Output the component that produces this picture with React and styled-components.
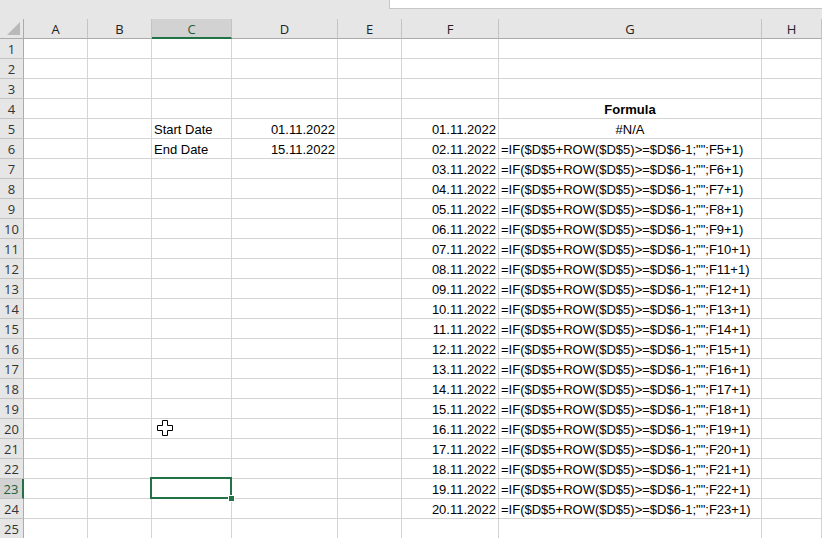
import React from 'react'
import styled, { createGlobalStyle } from 'styled-components'

const GlobalStyle = createGlobalStyle`
  html, body {
    margin: 0;
    padding: 0;
    background: #ffffff;
    overflow: hidden;
  }
`

const COLUMNS = ['A', 'B', 'C', 'D', 'E', 'F', 'G', 'H']
const WIDTHS = '24px 64px 64px 80px 106px 64px 97px 263px 1fr'
const SELECTED_COL = 'C'
const SELECTED_ROW = 23

const pad = (n) => String(n).padStart(2, '0')

// cell contents keyed by "C5" etc
const cells = {
  C5: { text: 'Start Date' },
  D5: { text: '01.11.2022', align: 'right' },
  C6: { text: 'End Date' },
  D6: { text: '15.11.2022', align: 'right' },
  G4: { text: 'Formula', align: 'center', bold: true },
  G5: { text: '#N/A', align: 'center' },
}
for (let r = 5; r <= 24; r++) {
  cells['F' + r] = { text: `${pad(r - 4)}.11.2022`, align: 'right' }
  if (r > 5) {
    cells['G' + r] = { text: `=IF($D$5+ROW($D$5)>=$D$6-1;"";F${r - 1}+1)` }
  }
}

export default function App() {
  const rows = Array.from({ length: 25 }, (_, i) => i + 1)

  return (
    <>
      <GlobalStyle />
      <Page>
        <TopStrip>
          <FormulaBox />
        </TopStrip>
        <Sheet>
          <Corner>
            <svg width="24" height="20" viewBox="0 0 24 20">
              <polygon points="7,16 20,16 20,3" fill="#b9b9b9" />
            </svg>
          </Corner>
          {COLUMNS.map((c) => (
            <ColHeader key={c} $selected={c === SELECTED_COL}>{c}</ColHeader>
          ))}
          {rows.map((r) => (
            <React.Fragment key={r}>
              <RowHeader $selected={r === SELECTED_ROW}>{r}</RowHeader>
              {COLUMNS.map((c) => {
                const cell = cells[c + r]
                return (
                  <Cell
                    key={c + r}
                    $align={cell?.align}
                    $bold={cell?.bold}
                    $active={c === SELECTED_COL && r === SELECTED_ROW}
                  >
                    {cell?.text}
                  </Cell>
                )
              })}
            </React.Fragment>
          ))}
        </Sheet>
        <Cursor>
          <svg width="16" height="16" viewBox="0 0 16 16">
            <path
              d="M5.5 0.5h5v5h5v5h-5v5h-5v-5h-5v-5h5z"
              fill="#ffffff"
              stroke="#000000"
              strokeWidth="1"
            />
          </svg>
        </Cursor>
      </Page>
    </>
  )
}

const Page = styled.div`
  position: relative;
  width: 822px;
  height: 538px;
  overflow: hidden;
  background: #ffffff;
`

const TopStrip = styled.div`
  height: 19px;
  background: #e6e6e6;
  display: flex;
  align-items: flex-start;
  padding-left: 389px;
  box-sizing: border-box;
`

const FormulaBox = styled.div`
  flex: 1;
  height: 9px;
  background: #ffffff;
  border-left: 1px solid #c6c6c6;
  border-bottom: 1px solid #c6c6c6;
  box-sizing: border-box;
`

const Sheet = styled.div`
  display: grid;
  grid-template-columns: ${WIDTHS};
  grid-auto-rows: 20px;
  font-family: "Liberation Sans", Arial, sans-serif;
`

const Corner = styled.div`
  background: #e6e6e6;
  border-right: 1px solid #ababab;
  border-bottom: 1px solid #ababab;
  box-sizing: border-box;
  svg {
    display: block;
  }
`

const ColHeader = styled.div`
  display: flex;
  align-items: center;
  justify-content: center;
  box-sizing: border-box;
  background: ${(p) => (p.$selected ? '#d2d2d2' : '#e6e6e6')};
  border-right: 1px solid #c4c4c4;
  border-bottom: ${(p) => (p.$selected ? '2px solid #217346' : '1px solid #ababab')};
  color: ${(p) => (p.$selected ? '#1f5f3b' : '#222222')};
  font-family: "Open Sans", "Noto Sans", sans-serif;
  font-size: 13px;
  padding-top: ${(p) => (p.$selected ? '1px' : '0')};
`

const RowHeader = styled.div`
  display: flex;
  align-items: center;
  justify-content: center;
  box-sizing: border-box;
  background: ${(p) => (p.$selected ? '#d2d2d2' : '#e6e6e6')};
  border-right: ${(p) => (p.$selected ? '2px solid #217346' : '1px solid #ababab')};
  border-bottom: 1px solid #c4c4c4;
  color: ${(p) => (p.$selected ? '#1f5f3b' : '#333333')};
  font-family: "Open Sans", "Noto Sans", sans-serif;
  font-size: 13px;
  padding-top: 1px;
`

const Cell = styled.div`
  position: relative;
  box-sizing: border-box;
  border-right: 1px solid #d4d4d4;
  border-bottom: 1px solid #d4d4d4;
  padding: 2px 2px 0 2px;
  font-size: 13px;
  line-height: 17px;
  color: #000000;
  white-space: nowrap;
  text-align: ${(p) => p.$align || 'left'};
  font-weight: ${(p) => (p.$bold ? 700 : 400)};

  ${(p) =>
    p.$active &&
    `
    &::after {
      content: '';
      position: absolute;
      left: -2px;
      top: -2px;
      right: -1px;
      bottom: -1px;
      border: 2px solid #217346;
      z-index: 2;
    }
    &::before {
      content: '';
      position: absolute;
      right: -4px;
      bottom: -4px;
      width: 5px;
      height: 5px;
      background: #217346;
      border: 1px solid #ffffff;
      z-index: 3;
    }
  `}
`

const Cursor = styled.div`
  position: absolute;
  left: 157px;
  top: 420px;
  width: 16px;
  height: 16px;
  pointer-events: none;
  svg {
    display: block;
  }
`
